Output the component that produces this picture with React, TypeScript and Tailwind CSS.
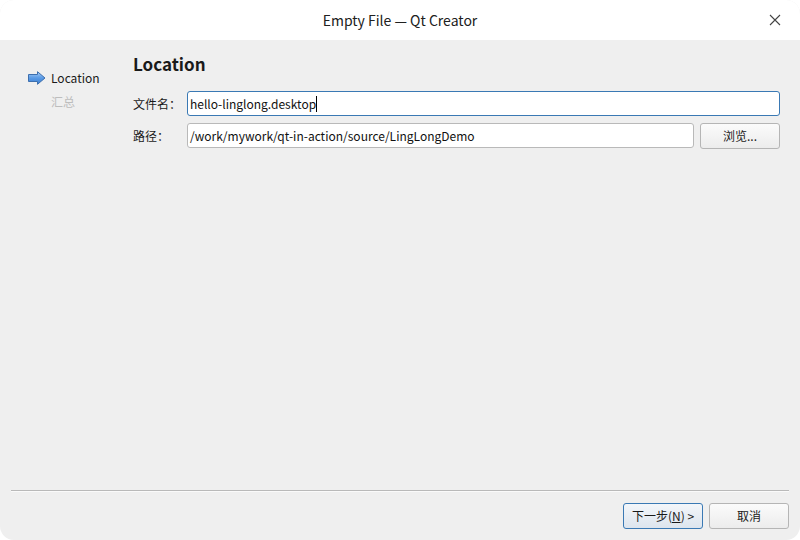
import React from "react";

const font = { fontFamily: '"Noto Sans CJK SC", "Noto Sans", sans-serif' };

function Arrow() {
  return (
    <svg width="18" height="14" viewBox="0 0 18 14">
      <defs>
        <linearGradient id="ag" x1="0" y1="0" x2="0" y2="1">
          <stop offset="0" stopColor="#a9cdf5" />
          <stop offset="0.5" stopColor="#5a9be6" />
          <stop offset="1" stopColor="#3b7dd0" />
        </linearGradient>
      </defs>
      <path
        d="M0.5 3.5 H9.5 V0.7 L17 7 L9.5 13.3 V10.5 H0.5 Z"
        fill="url(#ag)"
        stroke="#3d6fae"
        strokeWidth="1"
        strokeLinejoin="round"
      />
    </svg>
  );
}

export default function App() {
  return (
    <div className="w-[800px] h-[540px] bg-white" style={font}>
      <div className="w-[800px] h-[540px] flex flex-col rounded-[14px] overflow-hidden bg-[#efefef]">
        <div className="h-[40px] bg-white flex items-center justify-center relative shrink-0">
          <span className="text-[14px] text-[#202020]">Empty File — Qt Creator</span>
          <svg className="absolute left-[769px] top-[14px]" width="12" height="12" viewBox="0 0 12 12">
            <path d="M1 1 L11 11 M11 1 L1 11" stroke="#444" strokeWidth="1.1" />
          </svg>
        </div>
        <div className="flex-1 flex">
          <div className="w-[133px] pl-[28px] pt-[31px] shrink-0">
            <div className="flex items-center h-[14px] gap-[5px]">
              <Arrow />
              <span className="text-[12px] text-[#1a1a1a]">Location</span>
            </div>
            <div className="pl-[23px] mt-[8px] text-[12px] text-[#bdbdbd]">汇总</div>
          </div>
          <div className="flex-1 pr-[20px] pt-[11px]">
            <div className="text-[17px] font-bold text-[#1a1a1a] leading-[26px]">Location</div>
            <div className="mt-[14px] flex items-center h-[25px]">
              <span className="w-[54px] text-[12px] text-[#1a1a1a]">文件名：</span>
              <div className="flex-1 h-[25px] bg-white border border-[#3a79b4] rounded-[3px] flex items-center pl-[2px] text-[12px] text-[#111]">
                hello-linglong.desktop<span className="inline-block w-[1px] h-[16px] bg-black"></span>
              </div>
            </div>
            <div className="mt-[7px] flex items-center h-[25px]">
              <span className="w-[54px] text-[12px] text-[#1a1a1a]">路径：</span>
              <div className="flex-1 h-[25px] bg-white border border-[#b9b9b9] rounded-[3px] flex items-center pl-[2px] text-[12px] text-[#111]">
                /work/mywork/qt-in-action/source/LingLongDemo
              </div>
              <button className="ml-[6px] w-[80px] h-[26px] rounded-[3px] border border-[#b5b5b5] bg-gradient-to-b from-[#fbfbfb] to-[#ececec] text-[12px] text-[#1a1a1a]">
                浏览...
              </button>
            </div>
          </div>
        </div>
        <div className="mx-[11px] h-[1px] bg-[#b9b9b9]"></div>
        <div className="h-[1px] mx-[11px] bg-[#fafafa]"></div>
        <div className="h-[48px] flex justify-end items-start pt-[11px] pr-[11px] gap-[6px]">
          <button className="w-[80px] h-[26px] rounded-[3px] border border-[#3a79b4] bg-gradient-to-b from-[#f3f6fa] to-[#dde5ee] text-[12px] text-[#1a1a1a]">
            下一步(<span className="underline">N</span>) &gt;
          </button>
          <button className="w-[80px] h-[26px] rounded-[3px] border border-[#b5b5b5] bg-gradient-to-b from-[#fbfbfb] to-[#ececec] text-[12px] text-[#1a1a1a]">
            取消
          </button>
        </div>
      </div>
    </div>
  );
}
